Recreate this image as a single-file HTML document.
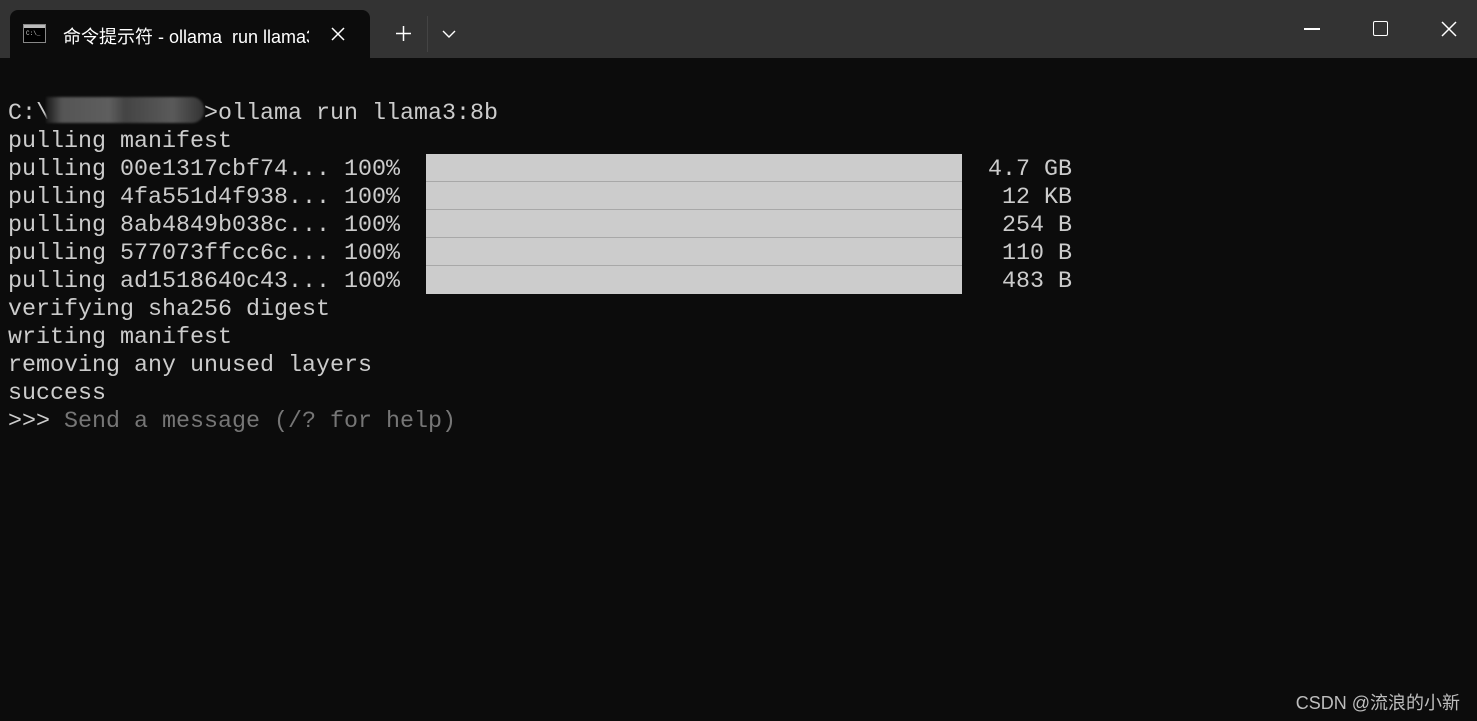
<!DOCTYPE html>
<html><head><meta charset="utf-8"><style>
*{margin:0;padding:0;box-sizing:border-box}
body{width:1477px;height:721px;background:#0c0c0c;overflow:hidden;position:relative;font-family:"Liberation Sans","Noto Sans CJK SC",sans-serif}
.top{position:absolute;left:0;top:0;width:1477px;height:58px;background:#333}
.tab{position:absolute;left:10px;top:10px;width:360px;height:48px;background:#0c0c0c;border-radius:8px 8px 0 0}
.tab .t{position:absolute;left:53px;top:13px;color:#fff;font-size:18px;white-space:nowrap;width:246px;overflow:hidden}
.term{position:absolute;left:8px;top:100px;font-family:"Liberation Mono",monospace;font-size:23.33px;line-height:28px;color:#cccccc;white-space:pre}
.bar{position:absolute;left:426px;width:536px;height:28px;background:#cccccc;border-bottom:1px solid #a8a8a8}
.sz{position:absolute;font-family:"Liberation Mono",monospace;font-size:23.33px;line-height:28px;color:#ccc;white-space:pre}
.blur{position:absolute;left:46px;top:97px;width:158px;height:26px;background:linear-gradient(90deg,#1a1a1a,#555 10%,#5e5e5e 40%,#444 50%,#5a5a5a 80%,#333);border-radius:0 12px 12px 0;filter:blur(1px)}
.wm{position:absolute;right:17px;top:689px;color:#bdbdbd;font-size:18px}
</style></head><body>
<div class="top">
<div class="tab">
<svg style="position:absolute;left:13px;top:14px" width="24" height="20"><rect x="0.5" y="0.5" width="22" height="18" fill="#000" stroke="#888"/><rect x="1" y="1" width="21" height="3" fill="#bbb"/><text x="3" y="11" fill="#ccc" font-size="6" font-family="Liberation Mono">C:\_</text></svg>
<div class="t">命令提示符 - ollama&nbsp; run llama3:8b</div>
<svg style="position:absolute;left:320px;top:16px" width="16" height="16"><path d="M2 2L14 14M14 2L2 14" stroke="#fff" stroke-width="1.5"/></svg>
</div>
<svg style="position:absolute;left:395px;top:25px" width="17" height="17"><path d="M8.5 1V16M1 8.5H16" stroke="#fff" stroke-width="1.5"/></svg>
<div style="position:absolute;left:427px;top:16px;width:1px;height:36px;background:#444"></div>
<svg style="position:absolute;left:442px;top:29px" width="14" height="10"><path d="M1 2L7 8L13 2" stroke="#fff" stroke-width="1.4" fill="none"/></svg>
<div style="position:absolute;left:1304px;top:28px;width:16px;height:1.5px;background:#fff"></div>
<div style="position:absolute;left:1373px;top:21px;width:15px;height:15px;border:1.5px solid #fff;border-radius:2px"></div>
<svg style="position:absolute;left:1441px;top:21px" width="16" height="16"><path d="M1 1L15 15M15 1L1 15" stroke="#fff" stroke-width="1.5"/></svg>
</div>
<div class="bar" style="top:154px"></div>
<div class="bar" style="top:182px"></div>
<div class="bar" style="top:210px"></div>
<div class="bar" style="top:238px"></div>
<div class="bar" style="top:266px;border-bottom:none"></div>
<div class="term">C:\           >ollama run llama3:8b
pulling manifest
pulling 00e1317cbf74... 100%
pulling 4fa551d4f938... 100%
pulling 8ab4849b038c... 100%
pulling 577073ffcc6c... 100%
pulling ad1518640c43... 100%
verifying sha256 digest
writing manifest
removing any unused layers
success
&gt;&gt;&gt; <span style="color:#767676">Send a message (/? for help)</span></div>
<div class="blur"></div>
<div class="sz" style="left:988px;top:156px">4.7 GB
 12 KB
 254 B
 110 B
 483 B</div>
<div class="wm">CSDN @流浪的小新</div>
</body></html>
